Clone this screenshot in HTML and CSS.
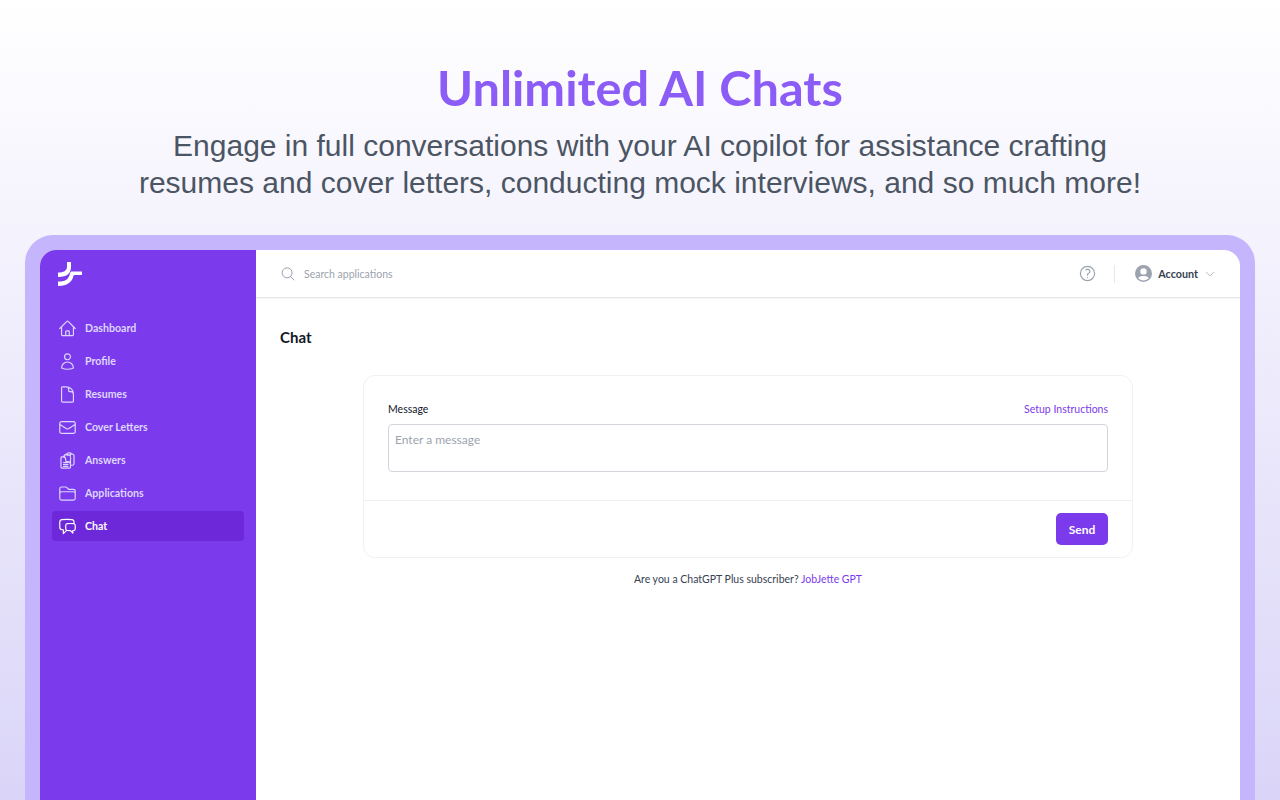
FILE: index.html
```html
<!DOCTYPE html>
<html lang="en">
<head>
<meta charset="UTF-8" />
<title>JobJette</title>
<link rel="stylesheet" href="styles.css">
</head>
<body>
  <header class="hero">
    <h1>Unlimited AI Chats</h1>
    <p>Engage in full conversations with your AI copilot for assistance crafting<br>resumes and cover letters, conducting mock interviews, and so much more!</p>
  </header>

  <div class="frame">
    <div class="app">
      <aside class="sidebar">
        <svg class="logo" viewBox="0 0 24 24" fill="#fff">
          <path d="M9 0h4v5c0 5-3 8.500-7 9.300-1.800.4-3.800.6-6 .7V10.500c3-.1 5-.4 6.500-1.300C8.300 8.200 9 6.500 9 4.500Z"/>
          <path d="M13.500 9.500H24V13H16.500c-.5 0-.8.300-1 .8-1.500 6-5.500 10.200-15.500 10.200V19.500c7 0 10.500-1.800 11.800-7.500.3-1.500.9-2.500 1.700-2.500Z"/>
        </svg>
        <nav class="nav">
          <a class="nav-item">
            <svg class="nav-icon" viewBox="0 0 24 24"><path d="M2.250 12 11.200 3.050c.45-.44 1.150-.44 1.600 0L21.750 12M4.500 9.750V19.880c0 .62.500 1.120 1.120 1.120H9.750v-4.880c0-.62.500-1.120 1.120-1.120h2.250c.62 0 1.120.500 1.120 1.120V21h4.130c.62 0 1.120-.500 1.120-1.120V9.750M8.250 21h8.250"/></svg>
            Dashboard
          </a>
          <a class="nav-item">
            <svg class="nav-icon" viewBox="0 0 24 24"><path d="M15.750 6a3.750 3.750 0 1 1-7.500 0 3.750 3.750 0 0 1 7.500 0ZM4.500 20.120a7.500 7.500 0 0 1 15 0A17.930 17.930 0 0 1 12 21.750c-2.680 0-5.220-.58-7.500-1.630Z"/></svg>
            Profile
          </a>
          <a class="nav-item">
            <svg class="nav-icon" viewBox="0 0 24 24"><path d="M19.500 14.250v-2.620a3.380 3.380 0 0 0-3.380-3.380h-1.500A1.120 1.120 0 0 1 13.500 7.120v-1.500a3.380 3.380 0 0 0-3.380-3.380H8.250M10.500 2.250H5.620c-.62 0-1.120.500-1.120 1.120v17.250c0 .62.500 1.120 1.120 1.120h12.750c.62 0 1.120-.500 1.120-1.120V11.250a9 9 0 0 0-9-9Z"/></svg>
            Resumes
          </a>
          <a class="nav-item">
            <svg class="nav-icon" viewBox="0 0 24 24"><path d="M21.750 6.750v10.500a2.250 2.250 0 0 1-2.250 2.250h-15a2.250 2.250 0 0 1-2.250-2.250V6.750m19.500 0A2.250 2.250 0 0 0 19.500 4.500h-15a2.250 2.250 0 0 0-2.250 2.250m19.500 0v.24a2.250 2.250 0 0 1-1.070 1.920l-7.500 4.610a2.250 2.250 0 0 1-2.360 0L3.320 8.910a2.250 2.250 0 0 1-1.070-1.910V6.750"/></svg>
            Cover Letters
          </a>
          <a class="nav-item">
            <svg class="nav-icon" viewBox="0 0 24 24"><path d="M8.250 7.500V6.110c0-1.130.85-2.100 1.980-2.190.37-.03.750-.06 1.120-.08M15.750 18H18a2.250 2.250 0 0 0 2.250-2.250V6.110c0-1.130-.85-2.090-1.980-2.190a48.400 48.400 0 0 0-1.120-.08M15.750 18.750v-1.880a3.380 3.380 0 0 0-3.380-3.380h-1.500a1.120 1.120 0 0 1-1.120-1.120v-1.500A3.380 3.380 0 0 0 6.380 7.500H5.250M17.150 3.840A2.250 2.250 0 0 0 15 2.250h-1.500a2.250 2.250 0 0 0-2.150 1.590c-.07.220-.1.450-.1.660v.750h4.500V4.500c0-.23-.03-.45-.1-.66ZM6.750 7.500H4.880c-.62 0-1.120.500-1.120 1.120v12c0 .62.500 1.120 1.120 1.120h9.750c.62 0 1.120-.500 1.120-1.120v-9.750A3 3 0 0 0 6.750 7.500ZM7 14.500h5.500M7 17h5.500M7 19.500h5.500"/></svg>
            Answers
          </a>
          <a class="nav-item">
            <svg class="nav-icon" viewBox="0 0 24 24"><path d="M2.250 12.750V12A2.250 2.250 0 0 1 4.500 9.750h15A2.250 2.250 0 0 1 21.750 12v.75m-8.690-6.440-2.120-2.120a1.500 1.500 0 0 0-1.060-.44H4.500A2.250 2.250 0 0 0 2.250 6v12a2.250 2.250 0 0 0 2.250 2.250h15A2.250 2.250 0 0 0 21.750 18V9a2.250 2.250 0 0 0-2.250-2.250h-5.380a1.500 1.500 0 0 1-1.060-.44Z"/></svg>
            Applications
          </a>
          <a class="nav-item active">
            <svg class="nav-icon" viewBox="0 0 24 24"><path d="M20.250 8.510c.88.280 1.500 1.130 1.500 2.100v4.290c0 1.140-.85 2.100-1.980 2.190-.34.030-.68.050-1.020.07V20.250l-3-3c-1.350 0-2.700-.060-4.020-.17a2.100 2.100 0 0 1-.83-.25M20.250 8.510a2.100 2.100 0 0 0-.48-.1 48.700 48.700 0 0 0-8.040 0c-1.130.1-1.980 1.050-1.980 2.190v4.290c0 .84.460 1.580 1.150 1.950M20.250 8.510V6.630c0-1.620-1.150-3.030-2.760-3.240A48.400 48.400 0 0 0 11.250 3c-2.110 0-4.190.14-6.240.41C3.400 3.600 2.250 5.010 2.250 6.630v6.240c0 1.620 1.150 3.030 2.760 3.240.58.080 1.160.14 1.740.19V21l4.150-4.150"/></svg>
            Chat
          </a>
        </nav>
      </aside>

      <div class="main">
        <div class="topbar">
          <div class="search">
            <svg class="search-icon" viewBox="0 0 24 24"><path d="m21 21-5.200-5.200m0 0A7.500 7.500 0 1 0 5.200 5.200a7.500 7.500 0 0 0 10.600 10.600Z"/></svg>
            <span>Search applications</span>
          </div>
          <div class="topbar-right">
            <svg class="help-icon" viewBox="0 0 24 24"><path d="M9.880 7.520c1.170-1.030 3.070-1.030 4.240 0 1.170 1.030 1.170 2.690 0 3.710-.2.180-.43.330-.67.440-.74.360-1.450.990-1.450 1.820v.750M21 12a9 9 0 1 1-18 0 9 9 0 0 1 18 0ZM12 17.250h.01"/></svg>
            <span class="topbar-sep"></span>
            <svg class="avatar" viewBox="0 0 24 24"><path fill-rule="evenodd" clip-rule="evenodd" d="M12 0a12 12 0 1 0 0 24 12 12 0 0 0 0-24Zm0 4.500a4.500 4.500 0 1 1 0 9 4.500 4.500 0 0 1 0-9Zm0 17.250c-3 0-5.700-1.350-7.500-3.500 1.500-1.900 4.300-2.750 7.500-2.750s6 .85 7.500 2.750c-1.800 2.150-4.500 3.500-7.500 3.500Z"/></svg>
            <span class="account">Account</span>
            <svg class="chevron" viewBox="0 0 24 24"><path d="m19.500 8.250-7.500 7.500-7.500-7.500"/></svg>
          </div>
        </div>

        <div class="content">
          <h2>Chat</h2>
          <div class="card">
            <div class="card-body">
              <div class="label-row">
                <label>Message</label>
                <a class="link">Setup Instructions</a>
              </div>
              <div class="textarea">Enter a message</div>
            </div>
            <div class="card-foot">
              <button class="send">Send</button>
            </div>
          </div>
          <p class="note">Are you a ChatGPT Plus subscriber? <a class="link">JobJette GPT</a></p>
        </div>
      </div>
    </div>
  </div>
</body>
</html>
```

FILE: styles.css
```css
html, body { height: 100%; }
body { margin: 0; height: 800px; overflow: hidden; font-family: Lato, sans-serif; background: linear-gradient(180deg, #ffffff 0%, #dad5f8 100%); }
h1, h2, p { margin: 0; }
svg { display: block; flex: none; }

.hero { height: 235px; box-sizing: border-box; padding-top: 57px; text-align: center; }
.hero h1 { font-size: 48.7px; line-height: 60px; font-weight: 700; color: #8b5cf6; }
.hero p { margin-top: 10px; font-family: "Liberation Sans", Arial, sans-serif; font-size: 30px; line-height: 37px; color: #4b5563; }

.frame { margin: 0 25px; height: 565px; box-sizing: border-box; padding: 15px 15px 0; background: #c4b5fd; border-radius: 28px 28px 0 0; }
.app { display: flex; height: 100%; background: #fff; border-radius: 16px 16px 0 0; overflow: hidden; }

.sidebar { width: 216px; flex: none; box-sizing: border-box; padding: 12px 12px 0; background: #7c3aed; }
.logo { width: 24px; height: 24px; margin-left: 6px; }
.nav { display: flex; flex-direction: column; gap: 3px; margin-top: 27px; }
.nav-item { display: flex; align-items: center; gap: 8px; height: 30px; padding-left: 6px; border-radius: 4px; font-size: 10.6px; font-weight: 700; color: #ddd6fe; }
.nav-item.active { background: #6d28d9; color: #fff; }
.nav-icon { width: 19px; height: 19px; fill: none; stroke: #ddd6fe; stroke-width: 1.5; stroke-linecap: round; stroke-linejoin: round; }
.nav-item.active .nav-icon { stroke: #fff; }

.main { flex: 1; min-width: 0; }
.topbar { display: flex; justify-content: space-between; align-items: center; height: 47px; padding: 0 24px; border-bottom: 1px solid #e5e7eb; box-shadow: 0 1px 1px rgba(0,0,0,0.03); }
.search { display: flex; align-items: center; gap: 8px; font-size: 10.5px; color: #9ca3af; }
.search-icon { width: 16px; height: 16px; fill: none; stroke: #9ca3af; stroke-width: 1.5; stroke-linecap: round; stroke-linejoin: round; }
.topbar-right { display: flex; align-items: center; }
.help-icon { width: 19px; height: 19px; fill: none; stroke: #9ca3af; stroke-width: 1.5; stroke-linecap: round; stroke-linejoin: round; }
.topbar-sep { width: 1px; height: 18px; margin: 0 20px 0 17px; background: #e5e7eb; }
.avatar { width: 17px; height: 17px; fill: #9ca3af; }
.account { margin-left: 6px; font-size: 10.75px; font-weight: 700; color: #374151; }
.chevron { width: 12px; height: 12px; margin-left: 6px; fill: none; stroke: #9ca3af; stroke-width: 1.5; stroke-linecap: round; stroke-linejoin: round; }

.content { padding: 29px 24px 0; }
.content h2 { font-size: 15px; line-height: 20px; font-weight: 700; color: #111827; }
.card { width: 768px; margin: 28px auto 0; background: #fff; border: 1px solid #f0f0f3; border-radius: 12px; }
.card-body { padding: 25px 24px 28px; }
.label-row { display: flex; justify-content: space-between; align-items: center; height: 16px; font-size: 10.5px; }
.label-row label { color: #111827; }
.link { color: #7c3aed; }
.textarea { height: 48px; margin-top: 7px; padding: 8px 6px; box-sizing: border-box; border: 1px solid #d1d5db; border-radius: 4px; font-size: 12px; line-height: 14px; color: #9ca3af; }
.card-foot { display: flex; justify-content: flex-end; padding: 12px 24px; border-top: 1px solid #f0f0f3; }
.send { width: 52px; height: 32px; padding: 0; border: 0; border-radius: 5px; background: #7c3aed; color: #fff; font-family: Lato, sans-serif; font-size: 12px; font-weight: 700; }
.note { margin-top: 14px; text-align: center; font-size: 10.5px; line-height: 14px; color: #374151; }
```
